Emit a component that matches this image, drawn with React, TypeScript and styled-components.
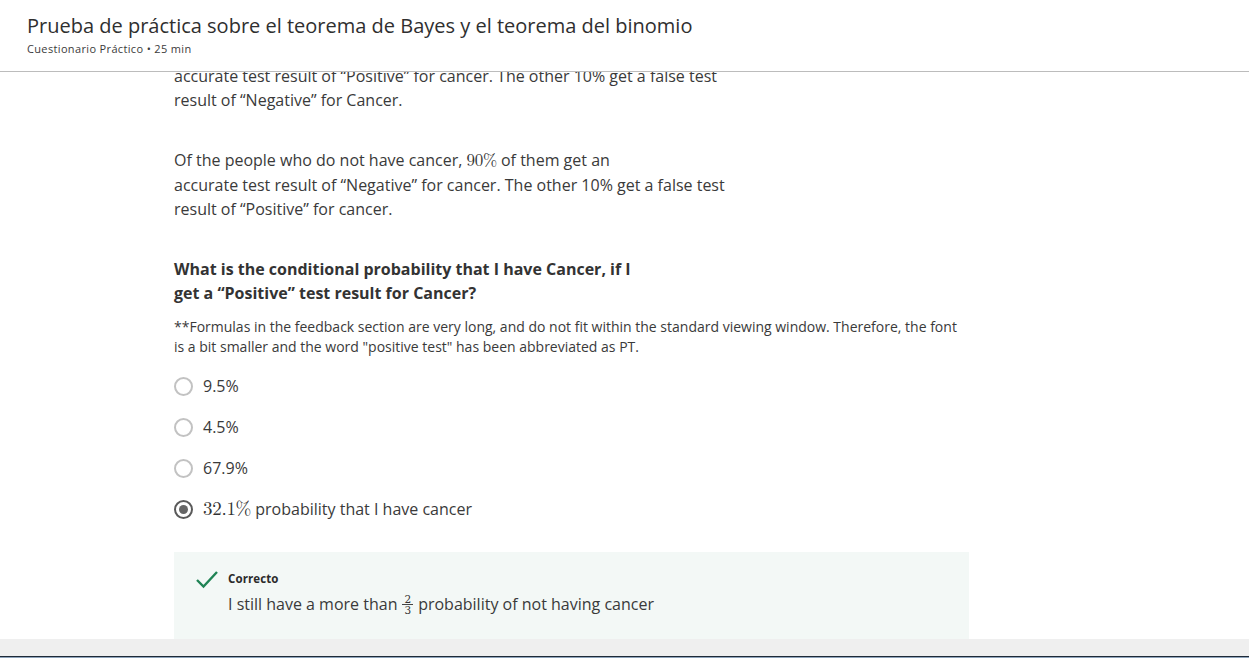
import React from "react";
import styled, { createGlobalStyle } from "styled-components";

const Global = createGlobalStyle`
  html, body { margin: 0; padding: 0; background: #fff; }
  body { font-family: "Open Sans", "Noto Sans", Arial, sans-serif; color: #373a3c; }
  * { box-sizing: border-box; }
`;

const Page = styled.div`
  width: 1249px;
  height: 658px;
  display: flex;
  flex-direction: column;
  overflow: hidden;
`;

const Header = styled.header`
  height: 72px;
  flex: none;
  padding: 12px 0 0 27px;
  border-bottom: 1px solid #bcbcbc;
  background: #fff;
`;

const Title = styled.h1`
  margin: 0;
  font-size: 20px;
  font-weight: 400;
  line-height: 28px;
  color: #2f2f2f;
`;

const Sub = styled.div`
  font-size: 11px;
  line-height: 16px;
  margin-top: 1px;
  color: #3b3b3b;
  letter-spacing: 0.35px;
`;

const Main = styled.main`
  flex: 1;
  overflow: hidden;
  position: relative;
`;

const Column = styled.div`
  margin: -8px 0 0 174px;
  width: 795px;
`;

const Para = styled.p`
  margin: 0 0 36px;
  font-size: 16px;
  line-height: 24px;
  width: 600px;
  color: #3a3a3a;
`;

const Math = styled.span<{ $size?: number }>`
  font-family: "Latin Modern Math", "DejaVu Serif", "Liberation Serif", serif;
  font-size: ${(p) => p.$size ?? 17}px;
  letter-spacing: -0.3px;
  color: #333;
`;

const Question = styled.p`
  margin: 0 0 12px;
  font-size: 16px;
  font-weight: 700;
  line-height: 24px;
  width: 560px;
  color: #333;
`;

const Note = styled.p`
  margin: 0 0 17px;
  font-size: 14px;
  line-height: 20px;
  color: #3a3a3a;
`;

const Options = styled.div`
  display: flex;
  flex-direction: column;
  gap: 17px;
  margin-bottom: 31px;
`;

const Option = styled.label`
  display: flex;
  align-items: center;
  gap: 10px;
  height: 24px;
  font-size: 16px;
  color: #3a3a3a;
`;

const Radio = styled.span<{ $checked?: boolean }>`
  width: 19px;
  height: 19px;
  border-radius: 50%;
  border: 2px solid ${(p) => (p.$checked ? "#5a5a5a" : "#c2c2c2")};
  display: inline-flex;
  align-items: center;
  justify-content: center;
  flex: none;
  &::after {
    content: "";
    width: 9px;
    height: 9px;
    border-radius: 50%;
    background: ${(p) => (p.$checked ? "#666" : "transparent")};
  }
`;

const Feedback = styled.div`
  background: #f3f8f6;
  padding: 18px 20px 40px 21px;
  display: flex;
  gap: 9px;
  height: 120px;
`;

const FeedbackBody = styled.div`
  display: flex;
  flex-direction: column;
`;

const Status = styled.div`
  font-size: 11.5px;
  font-weight: 700;
  line-height: 18px;
  color: #2b2b2b;
  letter-spacing: 0.1px;
`;

const FeedbackText = styled.div`
  font-size: 16px;
  line-height: 24px;
  margin-top: 4px;
  color: #3a3a3a;
  display: flex;
  align-items: center;
  gap: 5px;
`;

const Frac = styled.span`
  display: inline-flex;
  flex-direction: column;
  align-items: center;
  font-family: "DejaVu Serif", "Liberation Serif", serif;
  font-size: 10.5px;
  line-height: 10px;
  color: #333;
  & > span:first-child {
    border-bottom: 1px solid #444;
    padding: 0 2px;
  }
`;

const Footer = styled.div`
  height: 17px;
  flex: none;
  background: #efefef;
`;

const Taskbar = styled.div`
  height: 2px;
  flex: none;
  border-top: 1px solid #1e2a38;
  background: #8ea3ba;
`;

const Check = () => (
  <svg width="24" height="20" viewBox="0 0 24 20" style={{ flex: "none" }}>
    <path d="M2 10 L8.5 16.5 L22 2" fill="none" stroke="#1f8354" strokeWidth="2.4" />
  </svg>
);

export default function App() {
  return (
    <Page>
      <Global />
      <Header>
        <Title>Prueba de práctica sobre el teorema de Bayes y el teorema del binomio</Title>
        <Sub>Cuestionario Práctico • 25 min</Sub>
      </Header>
      <Main>
        <Column>
          <Para>
            accurate test result of “Positive” for cancer. The other 10% get a false test
            <br />
            result of “Negative” for Cancer.
          </Para>
          <Para>
            Of the people who do not have cancer, <Math>90%</Math> of them get an
            <br />
            accurate test result of “Negative” for cancer. The other 10% get a false test
            <br />
            result of “Positive” for cancer.
          </Para>
          <Question>
            What is the conditional probability that I have Cancer, if I
            <br />
            get a “Positive” test result for Cancer?
          </Question>
          <Note>
            **Formulas in the feedback section are very long, and do not fit within the standard viewing window. Therefore, the font
            <br />
            is a bit smaller and the word "positive test" has been abbreviated as PT.
          </Note>
          <Options>
            <Option>
              <Radio />
              9.5%
            </Option>
            <Option>
              <Radio />
              4.5%
            </Option>
            <Option>
              <Radio />
              67.9%
            </Option>
            <Option>
              <Radio $checked />
              <span>
                <Math $size={19}>32.1%</Math> probability that I have cancer
              </span>
            </Option>
          </Options>
          <Feedback>
            <Check />
            <FeedbackBody>
              <Status>Correcto</Status>
              <FeedbackText>
                I still have a more than
                <Frac>
                  <span>2</span>
                  <span>3</span>
                </Frac>
                probability of not having cancer
              </FeedbackText>
            </FeedbackBody>
          </Feedback>
        </Column>
      </Main>
      <Footer />
      <Taskbar />
    </Page>
  );
}
